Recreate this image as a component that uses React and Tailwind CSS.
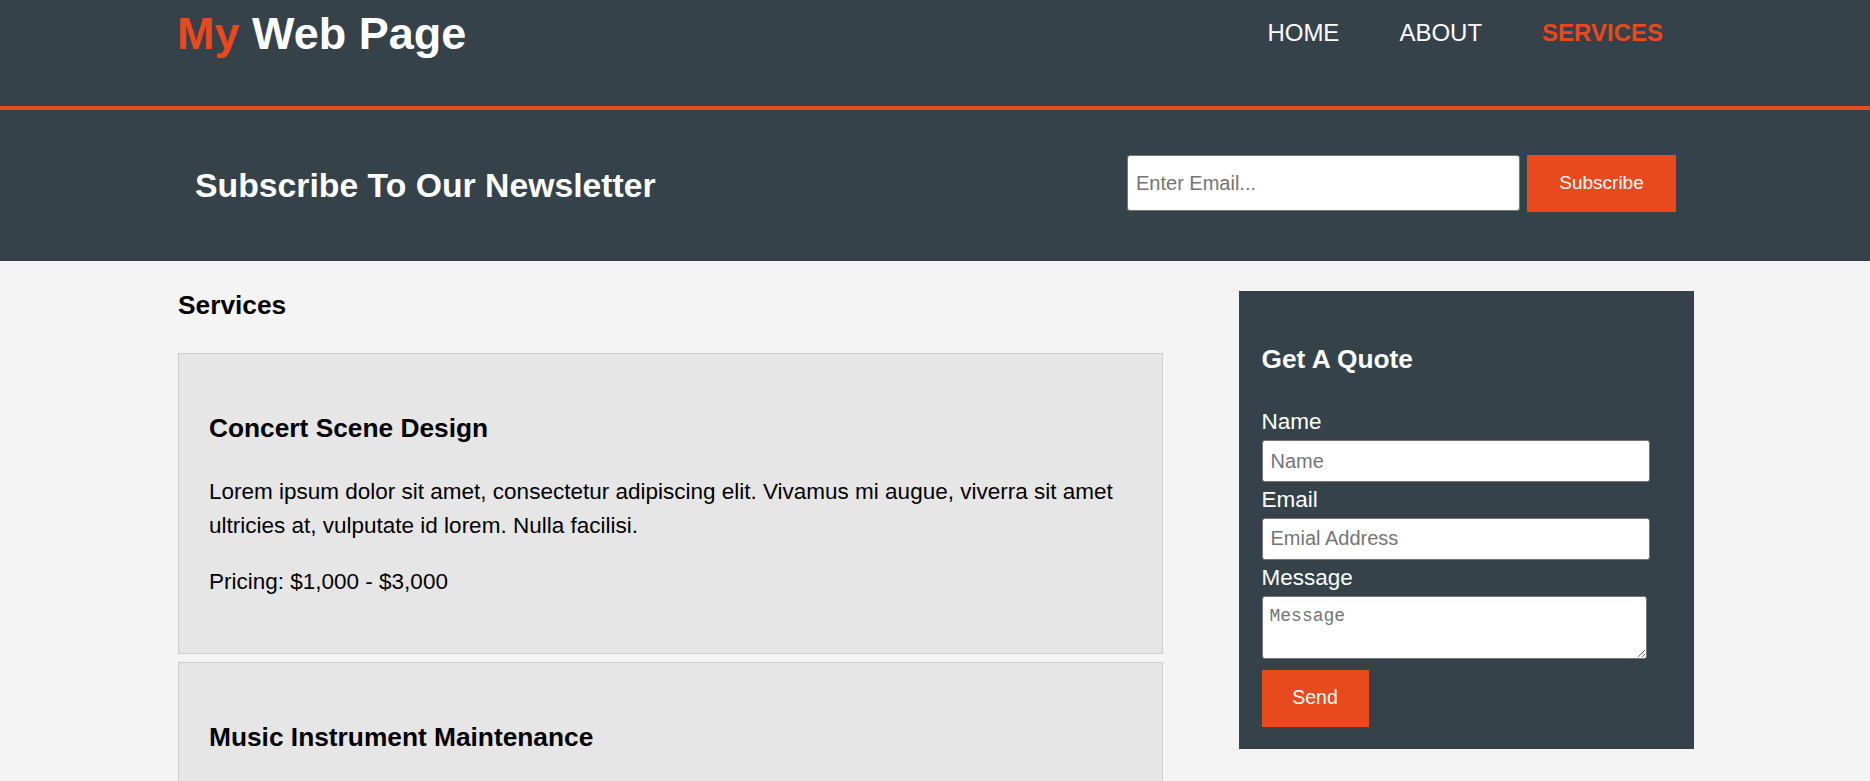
const services = [
  {
    title: 'Concert Scene Design',
    pricing: 'Pricing: $1,000 - $3,000',
  },
  {
    title: 'Music Instrument Maintenance',
    pricing: 'Pricing: $500 - $1,000',
  },
  {
    title: 'Sound Engineering',
    pricing: 'Pricing: $2,000 - $4,000',
  },
];

const lorem =
  'Lorem ipsum dolor sit amet, consectetur adipiscing elit. Vivamus mi augue, viverra sit amet ultricies at, vulputate id lorem. Nulla facilisi.';

export default function App() {
  return (
    <div className="min-h-screen bg-[#f4f4f4] font-['Liberation_Sans',Arial,sans-serif] text-black">
      {/* header */}
      <header className="h-[110px] bg-[#35424a] border-b-4 border-[#e8491d] text-white">
        <div className="w-[1516px] mx-auto flex justify-between items-start">
          <h1 className="text-[45px] font-bold leading-[1.5]">
            <span className="text-[#e8491d]">My</span> Web Page
          </h1>
          <nav className="mt-[15px]">
            <ul className="flex text-[24px] leading-[1.5] uppercase">
              <li className="px-[30px]"><a href="#">Home</a></li>
              <li className="px-[30px]"><a href="#">About</a></li>
              <li className="pl-[30px] pr-[30px] text-[#e8491d] font-bold"><a href="#">Services</a></li>
            </ul>
          </nav>
        </div>
      </header>

      {/* newsletter */}
      <section className="h-[151px] bg-[#35424a] text-white">
        <div className="w-[1481px] h-full ml-[195px] flex items-center justify-between">
          <h1 className="text-[33.75px] font-bold leading-[1.5]">Subscribe To Our Newsletter</h1>
          <form className="flex items-start gap-[7px] mb-1" onSubmit={(e) => e.preventDefault()}>
            <input
              type="email"
              placeholder="Enter Email..."
              className="w-[393px] h-[56px] bg-white border border-[#767676] rounded-[3px] px-[8px] text-[20px] text-black placeholder:text-[#757575] outline-none"
            />
            <button className="w-[149px] h-[57px] bg-[#e8491d] text-white text-[19px]">Subscribe</button>
          </form>
        </div>
      </section>

      {/* main */}
      <div className="w-[1516px] ml-[178px] flex justify-between items-start">
        <main className="w-[985px]">
          <h3 className="mt-[24.6px] text-[26.3px] font-bold leading-[1.5]">Services</h3>
          <ul className="mt-[28px]">
            {services.map((s) => (
              <li key={s.title} className="mb-2 px-[30px] pt-[30px] pb-[30px] border border-[#cccccc] bg-[#e6e6e6] text-[22.5px] leading-[1.5]">
                <h3 className="mt-[25px] text-[26.3px] font-bold leading-[1.5]">{s.title}</h3>
                <p className="mt-[27px]">{lorem}</p>
                <p className="mt-[22px] mb-[24px]">{s.pricing}</p>
              </li>
            ))}
          </ul>
        </main>

        <aside className="w-[455px] mt-[30px] bg-[#35424a] text-white p-[22.5px]">
          <h3 className="mt-[26px] mb-[26.4px] text-[26.3px] font-bold leading-[1.5]">Get A Quote</h3>
          <form onSubmit={(e) => e.preventDefault()}>
            <label className="block text-[22.5px] leading-[1.5]">Name</label>
            <input
              type="text"
              placeholder="Name"
              className="block w-[388px] h-[42px] my-[1px] bg-white border border-[#767676] rounded-[3px] px-[8px] text-[20px] text-black placeholder:text-[#757575] outline-none"
            />
            <label className="block text-[22.5px] leading-[1.5]">Email</label>
            <input
              type="email"
              placeholder="Emial Address"
              className="block w-[388px] h-[42px] my-[1px] bg-white border border-[#767676] rounded-[3px] px-[8px] text-[20px] text-black placeholder:text-[#757575] outline-none"
            />
            <label className="block text-[22.5px] leading-[1.5]">Message</label>
            <textarea
              placeholder="Message"
              className="block w-[385px] h-[63px] mt-[1px] bg-white border border-[#767676] rounded-[3px] px-[7px] pt-[9px] font-['Liberation_Mono',monospace] text-[18px] leading-[1.15] text-black placeholder:text-[#757575] outline-none"
            />
            <button className="block mt-[11px] w-[107px] h-[57px] bg-[#e8491d] text-white text-[19.5px]">Send</button>
          </form>
        </aside>
      </div>
    </div>
  );
}
